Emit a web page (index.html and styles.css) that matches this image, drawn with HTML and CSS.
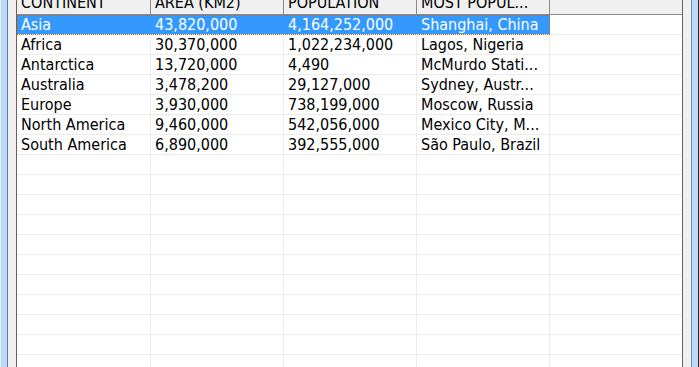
FILE: index.html
```html
<!DOCTYPE html>
<html>
<head>
<meta charset="utf-8">
<link rel="stylesheet" href="styles.css">
</head>
<body>
<div class="window">
  <div class="frame frame-l"></div>
  <div class="pane">
    <div class="table">
      <div class="head">
        <div class="hc"><span>CONTINENT</span></div>
        <div class="hc"><span>AREA (KM2)</span></div>
        <div class="hc"><span>POPULATION</span></div>
        <div class="hc"><span>MOST POPUL...</span></div>
        <div class="hc last"><span></span></div>
      </div>
      <div class="body">
        <div class="row sel"><div class="c">Asia</div><div class="c">43,820,000</div><div class="c">4,164,252,000</div><div class="c">Shanghai, China</div><div class="c last"></div></div>
        <div class="row"><div class="c">Africa</div><div class="c">30,370,000</div><div class="c">1,022,234,000</div><div class="c">Lagos, Nigeria</div><div class="c last"></div></div>
        <div class="row"><div class="c">Antarctica</div><div class="c">13,720,000</div><div class="c">4,490</div><div class="c">McMurdo Stati...</div><div class="c last"></div></div>
        <div class="row"><div class="c">Australia</div><div class="c">3,478,200</div><div class="c">29,127,000</div><div class="c">Sydney, Austr...</div><div class="c last"></div></div>
        <div class="row"><div class="c">Europe</div><div class="c">3,930,000</div><div class="c">738,199,000</div><div class="c">Moscow, Russia</div><div class="c last"></div></div>
        <div class="row"><div class="c">North America</div><div class="c">9,460,000</div><div class="c">542,056,000</div><div class="c">Mexico City, M...</div><div class="c last"></div></div>
        <div class="row"><div class="c">South America</div><div class="c">6,890,000</div><div class="c">392,555,000</div><div class="c">São Paulo, Brazil</div><div class="c last"></div></div>
        <div class="row"><div class="c"></div><div class="c"></div><div class="c"></div><div class="c"></div><div class="c last"></div></div>
        <div class="row"><div class="c"></div><div class="c"></div><div class="c"></div><div class="c"></div><div class="c last"></div></div>
        <div class="row"><div class="c"></div><div class="c"></div><div class="c"></div><div class="c"></div><div class="c last"></div></div>
        <div class="row"><div class="c"></div><div class="c"></div><div class="c"></div><div class="c"></div><div class="c last"></div></div>
        <div class="row"><div class="c"></div><div class="c"></div><div class="c"></div><div class="c"></div><div class="c last"></div></div>
        <div class="row"><div class="c"></div><div class="c"></div><div class="c"></div><div class="c"></div><div class="c last"></div></div>
        <div class="row"><div class="c"></div><div class="c"></div><div class="c"></div><div class="c"></div><div class="c last"></div></div>
        <div class="row"><div class="c"></div><div class="c"></div><div class="c"></div><div class="c"></div><div class="c last"></div></div>
        <div class="row"><div class="c"></div><div class="c"></div><div class="c"></div><div class="c"></div><div class="c last"></div></div>
        <div class="row"><div class="c"></div><div class="c"></div><div class="c"></div><div class="c"></div><div class="c last"></div></div>
        <div class="row"><div class="c"></div><div class="c"></div><div class="c"></div><div class="c"></div><div class="c last"></div></div>
      </div>
    </div>
  </div>
  <div class="frame frame-r"></div>
</div>
</body>
</html>
```
FILE: styles.css
```css
html, body {
  margin: 0;
  padding: 0;
  background: #f0f0f0;
}
.window {
  display: flex;
  width: 699px;
  height: 367px;
  overflow: hidden;
  font-family: "DejaVu Sans Condensed", "DejaVu Sans", sans-serif;
  font-size: 16px;
  color: #000;
}
.frame {
  width: 8px;
  flex-shrink: 0;
  box-sizing: border-box;
  background: #bcd9f7;
}
.frame-l {
  border-left: 1px solid #e4eefa;
  border-right: 1px solid #5d7fa3;
}
.frame-r {
  border-left: 1px solid #6f8fb2;
  border-right: 1px solid #2b2b2b;
}
.pane {
  flex: 1;
  background: #f0f0f0;
  padding: 0 8px;
  display: flex;
}
.table {
  flex: 1;
  background: #fff;
  border-left: 1px solid #646464;
  border-right: 1px solid #646464;
  display: flex;
  flex-direction: column;
  overflow: hidden;
}
.head, .row {
  display: grid;
  grid-template-columns: 134px 133px 133px 133px 132px;
  flex-shrink: 0;
}
.body {
  flex-shrink: 0;
}
.head {
  height: 15px;
  box-sizing: border-box;
  border-bottom: 1px solid #8a8a8a;
  background: #f0f0f0;
  overflow: hidden;
}
.hc {
  border-right: 1px solid #8a8a8a;
  padding-left: 4px;
  white-space: nowrap;
}
.hc span {
  display: block;
  line-height: 20px;
  margin-top: -7px;
}
.hc.last {
  border-right: none;
}
.row {
  height: 20px;
  box-sizing: border-box;
  border-bottom: 1px solid #ececec;
}
.c {
  border-right: 1px solid #ececec;
  padding-left: 4px;
  line-height: 19px;
  white-space: nowrap;
  overflow: hidden;
}
.c.last {
  border-right: none;
}
.row.sel .c {
  background: #3399ff;
  color: #fff;
  border-right-color: #3399ff;
}
.row.sel .c.last {
  background: #fff;
}
.row.sel {
  position: relative;
}
.row.sel::after {
  content: "";
  position: absolute;
  left: 0;
  top: 0;
  width: 533px;
  height: 20px;
  box-sizing: border-box;
  border: 1px dotted #c8641e;
  pointer-events: none;
}
```
